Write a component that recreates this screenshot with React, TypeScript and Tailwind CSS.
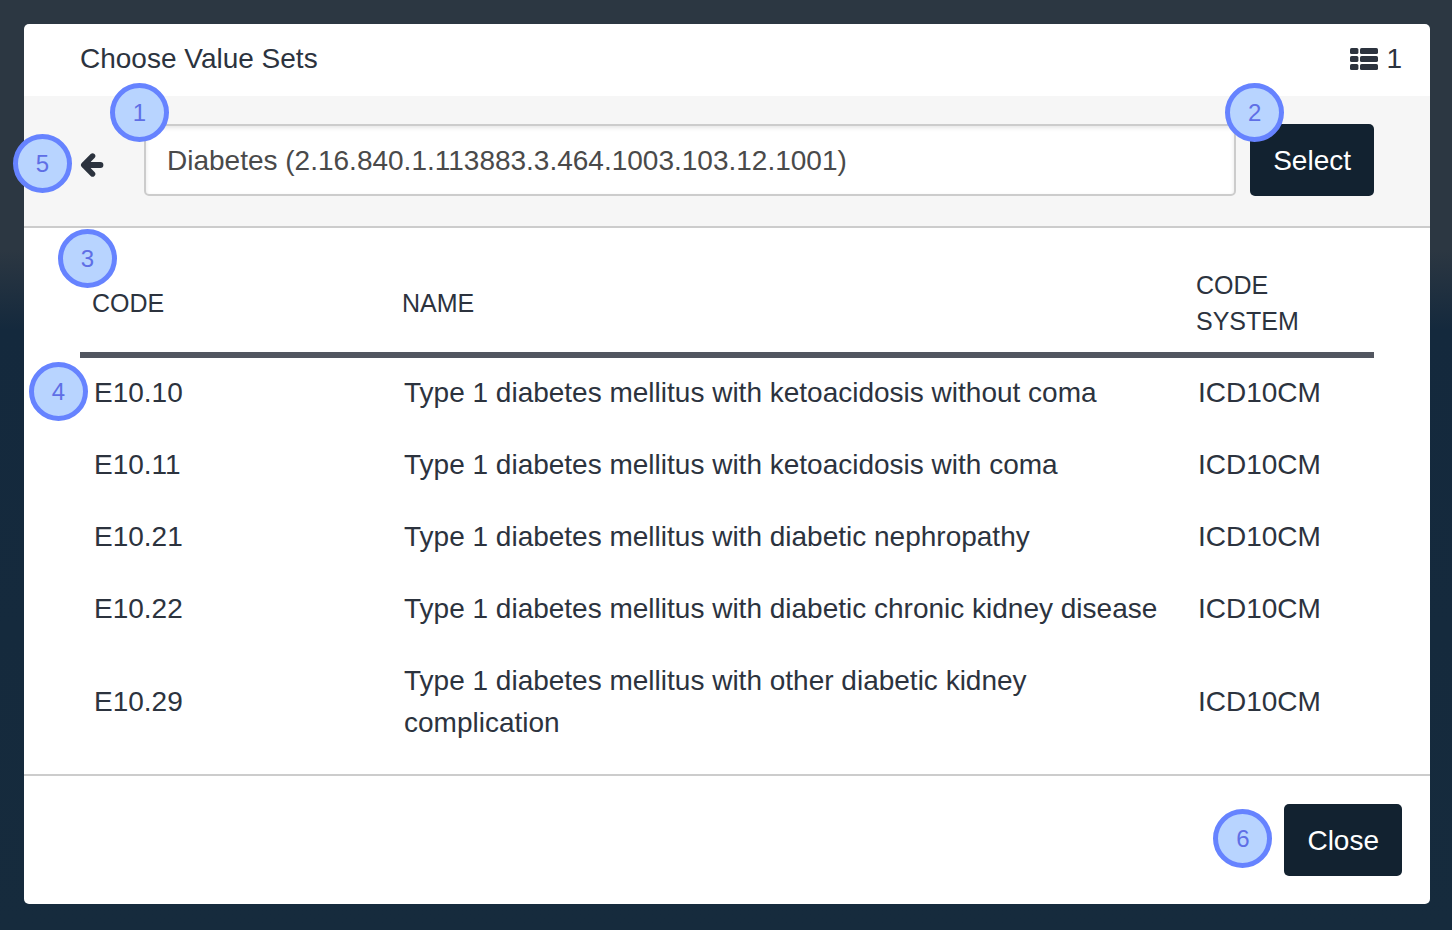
import type { ReactNode } from "react";

const codes = [
  { code: "E10.10", name: "Type 1 diabetes mellitus with ketoacidosis without coma", system: "ICD10CM" },
  { code: "E10.11", name: "Type 1 diabetes mellitus with ketoacidosis with coma", system: "ICD10CM" },
  { code: "E10.21", name: "Type 1 diabetes mellitus with diabetic nephropathy", system: "ICD10CM" },
  { code: "E10.22", name: "Type 1 diabetes mellitus with diabetic chronic kidney disease", system: "ICD10CM" },
  { code: "E10.29", name: "Type 1 diabetes mellitus with other diabetic kidney complication", system: "ICD10CM" },
];

function Marker({ children, className }: { children: ReactNode; className: string }) {
  return (
    <span
      className={`absolute z-10 flex size-[59px] items-center justify-center rounded-full border-[5px] border-[#6683ff] bg-[#b8d4ff] text-2xl text-[#5f6fe6] ${className}`}
    >
      {children}
    </span>
  );
}

function ListIcon() {
  return (
    <svg width="28" height="22" viewBox="0 0 28 22" fill="currentColor" aria-hidden="true">
      {[0, 8, 16].map((y) => (
        <g key={y}>
          <rect x="0" y={y} width="8.4" height="6" rx="1.6" />
          <rect x="10" y={y} width="18" height="6" rx="1.6" />
        </g>
      ))}
    </svg>
  );
}

function ArrowLeftIcon() {
  return (
    <svg
      width="24"
      height="24"
      viewBox="0 0 24 24"
      fill="none"
      stroke="currentColor"
      strokeWidth="5.4"
      strokeLinecap="round"
      strokeLinejoin="round"
      aria-hidden="true"
    >
      <path d="M12.6 3 3.7 12l8.9 9" />
      <path d="M5 12h15.4" strokeWidth="6" />
      <path d="M4 12l6-4v8z" fill="currentColor" strokeWidth="1" />
    </svg>
  );
}

export default function App() {
  return (
    <div className="min-h-screen bg-[linear-gradient(to_bottom,#2c3742_0px,#2c3742_250px,#14293d_330px,#162b3d_100%)] py-6 pr-[22px] pl-6 font-['Liberation_Sans',Arial,sans-serif] text-[28px] leading-[42px] text-[#2c333e]">
      <div role="dialog" aria-labelledby="dialog-title" className="rounded-[5px] bg-white">
        <header className="flex items-center justify-between pt-[14px] pr-7 pb-4 pl-14">
          <h1 id="dialog-title">Choose Value Sets</h1>
          <div className="flex items-center gap-2">
            <ListIcon />
            <span>1</span>
          </div>
        </header>

        <div className="flex items-center border-b-2 border-[#cccccc] bg-[#f6f6f6] px-14 pt-7 pb-[30px]">
          <div className="relative mr-10 flex pt-[10px]">
            <button type="button" aria-label="Back">
              <ArrowLeftIcon />
            </button>
            <Marker className="-top-[9px] -left-[67px]">5</Marker>
          </div>
          <div className="relative mr-[14px] flex-1">
            <input
              type="text"
              aria-label="Value set"
              defaultValue="Diabetes (2.16.840.1.113883.3.464.1003.103.12.1001)"
              className="h-[72px] w-full rounded-[5px] border-2 border-[#cccccc] bg-white px-[21px] pt-[2px] text-[#4a4a4a] shadow-[inset_0_2px_4px_rgba(0,0,0,0.1)] outline-none"
            />
            <Marker className="-top-[41px] -left-[34px]">1</Marker>
          </div>
          <div className="relative">
            <button type="button" className="rounded-[5px] bg-[#122230] px-[23px] pt-4 pb-[14px] text-white">
              Select
            </button>
            <Marker className="-top-[41px] -left-[25px]">2</Marker>
          </div>
        </div>

        <div className="border-b-2 border-[#cccccc] px-14 pt-7 pb-[14px]">
          <div className="relative">
            <Marker className="-top-[27px] -left-[22px]">3</Marker>
            <table className="w-full table-fixed border-collapse text-left">
              <thead>
                <tr className="text-[25px] leading-9 uppercase">
                  <th scope="col" className="w-[310px] px-3 pt-[11px] pb-[13px] font-normal">Code</th>
                  <th scope="col" className="px-3 pt-[11px] pb-[13px] font-normal">Name</th>
                  <th scope="col" className="w-[190px] px-3 pt-[11px] pb-[13px] font-normal">Code System</th>
                </tr>
                <tr aria-hidden="true">
                  <td colSpan={3} className="h-[6px] bg-[#525660] p-0" />
                </tr>
              </thead>
              <tbody>
                {codes.map((row, i) => (
                  <tr key={row.code}>
                    <td className="relative px-[14px] pt-[14px] pb-4">
                      {row.code}
                      {i === 0 && <Marker className="top-1 -left-[51px]">4</Marker>}
                    </td>
                    <td className="px-[14px] pt-[14px] pb-4">{row.name}</td>
                    <td className="px-[14px] pt-[14px] pb-4">{row.system}</td>
                  </tr>
                ))}
              </tbody>
            </table>
          </div>
        </div>

        <footer className="flex justify-end p-7">
          <div className="relative">
            <button type="button" className="rounded-[5px] bg-[#122230] px-[23px] pt-4 pb-[14px] text-white">
              Close
            </button>
            <Marker className="top-[5px] -left-[71px]">6</Marker>
          </div>
        </footer>
      </div>
    </div>
  );
}
